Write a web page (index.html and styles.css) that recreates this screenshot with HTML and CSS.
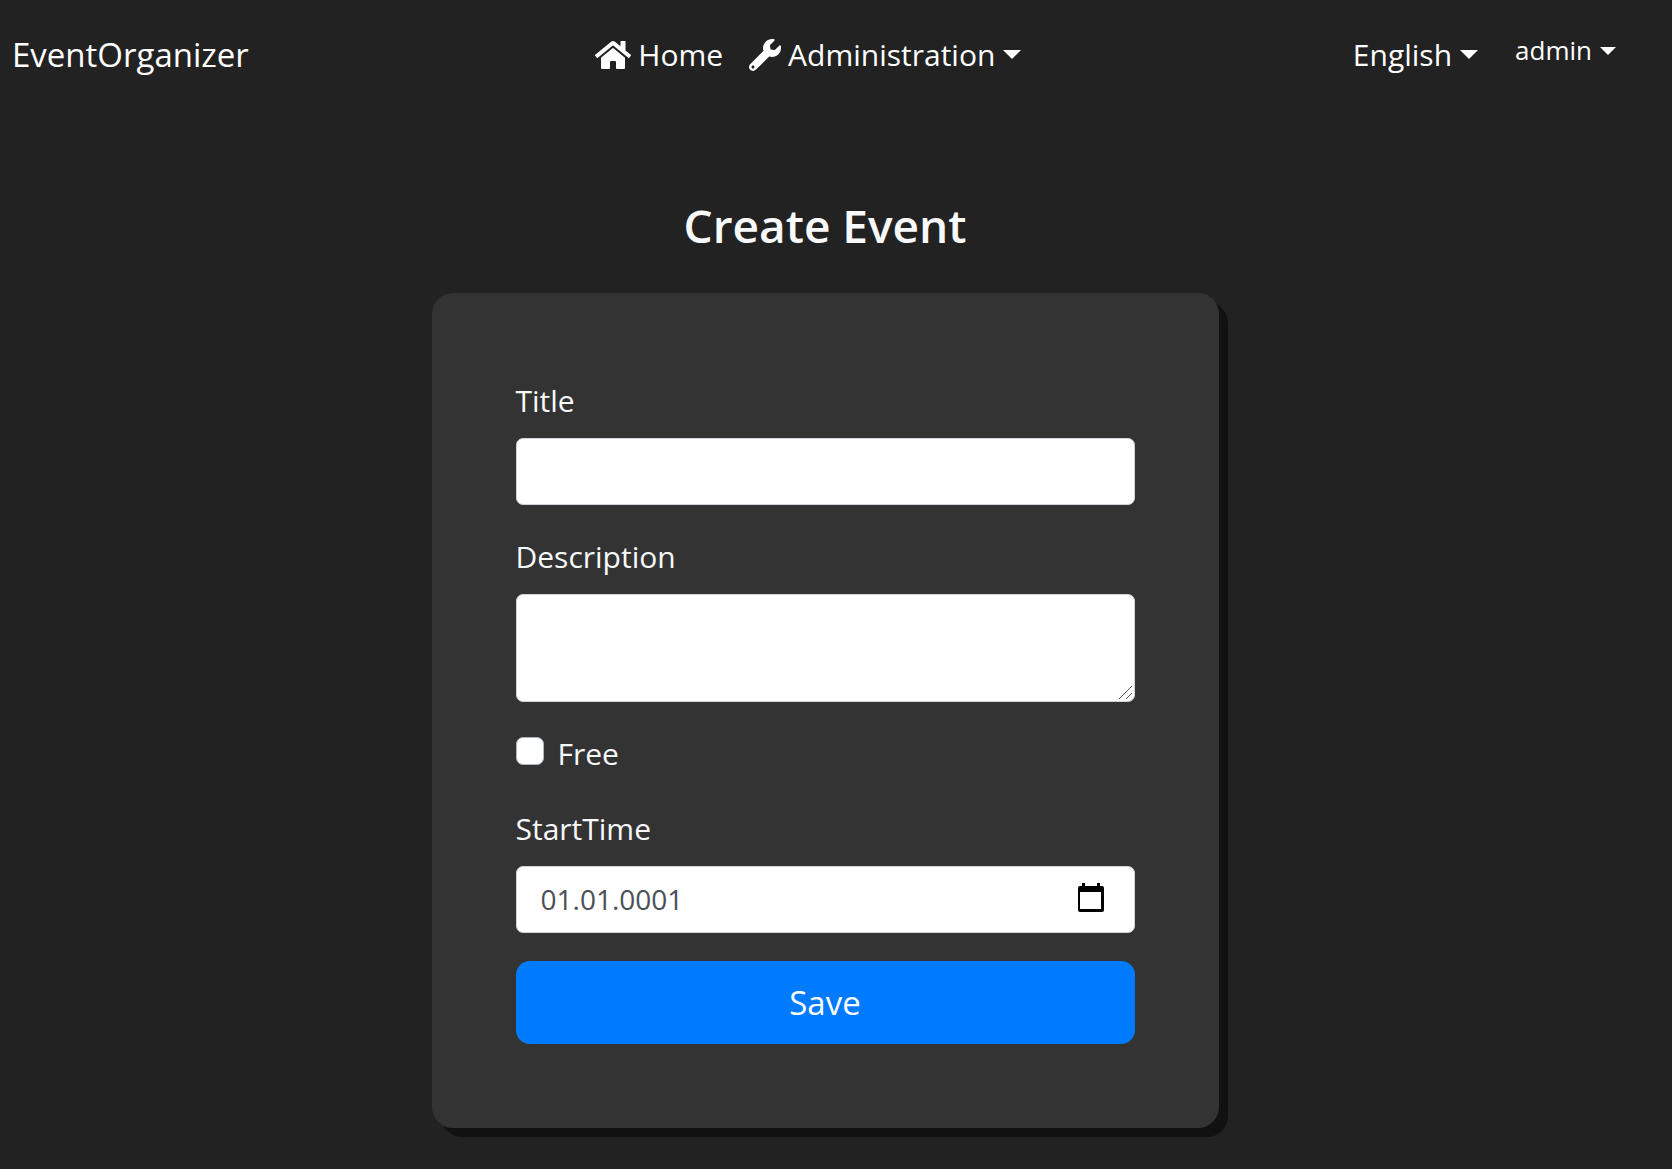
FILE: index.html
```html
<!DOCTYPE html>
<html lang="en">
<head>
<meta charset="utf-8">
<meta name="viewport" content="width=device-width, initial-scale=1">
<title>Create Event - EventOrganizer</title>
<link rel="stylesheet" href="styles.css">
</head>
<body>
<header class="navbar">
  <a class="brand" href="#">EventOrganizer</a>
  <nav class="menu">
    <a class="menu-item" href="#"><svg class="icon-home" viewBox="0 0 576 512" aria-hidden="true"><path fill="currentColor" d="M280.37 148.26L96 300.11V464a16 16 0 0 0 16 16l112.06-.29a16 16 0 0 0 15.92-16V368a16 16 0 0 1 16-16h64a16 16 0 0 1 16 16v95.64a16 16 0 0 0 16 16.05L464 480a16 16 0 0 0 16-16V300L295.67 148.26a12.19 12.19 0 0 0-15.3 0zM571.6 251.47L488 182.56V44.05a12 12 0 0 0-12-12h-56a12 12 0 0 0-12 12v72.61L318.47 43a48 48 0 0 0-61 0L4.34 251.47a12 12 0 0 0-1.6 16.9l25.5 31A12 12 0 0 0 45.15 301l235.22-193.74a12.19 12.19 0 0 1 15.3 0L530.9 301a12 12 0 0 0 16.9-1.6l25.5-31a12 12 0 0 0-1.7-16.93z"/></svg>Home</a>
    <button class="menu-item dropdown" type="button"><svg class="icon-wrench" viewBox="0 0 512 512" aria-hidden="true"><path fill="currentColor" d="M507.73 109.1c-2.24-9.03-13.54-12.09-20.12-5.51l-74.36 74.36-67.88-11.31-11.31-67.88 74.36-74.36c6.62-6.62 3.43-17.9-5.66-20.16-47.38-11.74-99.55.91-136.58 37.93-39.64 39.64-50.55 97.1-34.05 147.2L18.74 402.76c-24.99 24.99-24.99 65.51 0 90.5 24.99 24.99 65.51 24.99 90.5 0l213.21-213.21c50.12 16.71 107.47 5.68 147.37-34.22 37.07-37.07 49.7-89.32 37.91-136.73zM64 472c-13.25 0-24-10.75-24-24 0-13.26 10.75-24 24-24s24 10.74 24 24c0 13.25-10.75 24-24 24z"/></svg>Administration</button>
  </nav>
  <div class="account">
    <button class="menu-item dropdown" type="button">English</button>
    <button class="menu-item user dropdown" type="button">admin</button>
  </div>
</header>
<main class="page">
  <h1 class="heading">Create Event</h1>
  <form class="card">
    <div class="field">
      <label class="label" for="title">Title</label>
      <input class="control" id="title" type="text">
    </div>
    <div class="field">
      <label class="label" for="description">Description</label>
      <textarea class="control area" id="description"></textarea>
    </div>
    <div class="check">
      <input class="checkbox" id="free" type="checkbox">
      <label class="label" for="free">Free</label>
    </div>
    <div class="field">
      <label class="label" for="start">StartTime</label>
      <div class="control date">
        <input class="date-input" id="start" type="text" value="01.01.0001">
        <button class="picker" type="button" aria-label="Open calendar"><svg class="icon-calendar" viewBox="0 0 28 30" aria-hidden="true"><path fill="currentColor" fill-rule="evenodd" d="M5 0h3v3h12V0h3v3h2a2 2 0 0 1 2 2v22a2 2 0 0 1-2 2H3a2 2 0 0 1-2-2V5a2 2 0 0 1 2-2h2zM3 9v17h21V9z"/></svg></button>
      </div>
    </div>
    <button class="save" type="submit">Save</button>
  </form>
</main>
</body>
</html>
```
FILE: styles.css
```css
* {
  box-sizing: border-box;
}

body {
  margin: 0;
  background: #222;
  color: #f8f9fa;
  font-family: "Open Sans", "Noto Sans", sans-serif;
  font-size: 30px;
  line-height: 47px;
}

button,
input,
textarea {
  font: inherit;
}

.navbar {
  display: flex;
  justify-content: space-between;
  align-items: center;
  padding: 31px 56px 27px 12px;
  color: #fff;
}

.brand {
  margin-right: 28px;
  color: inherit;
  font-size: 33px;
  text-decoration: none;
}

.menu,
.account {
  display: flex;
  align-items: flex-start;
}

.menu-item {
  display: flex;
  align-items: center;
  padding: 0 13px;
  border: 0;
  background: none;
  color: inherit;
  text-decoration: none;
  cursor: pointer;
}

.dropdown::after {
  content: "";
  margin-left: 8px;
  border: 9px solid transparent;
  border-top-color: currentColor;
  border-bottom: 0;
}

.icon-home {
  width: 36px;
  height: 32px;
  margin-right: 7px;
}

.icon-wrench {
  width: 32px;
  height: 32px;
  margin-right: 7px;
}

.user {
  padding: 0 0 0 24px;
  font-size: 26px;
  line-height: 39px;
}

.user::after {
  border-width: 8px 8px 0;
}

.page {
  padding: 84px 22px 32px 0;
}

.heading {
  margin: 0 0 32px;
  font-size: 46px;
  font-weight: 600;
  line-height: 72px;
  text-align: center;
}

.card {
  display: flex;
  flex-direction: column;
  gap: 28px;
  max-width: 787px;
  margin: 0 auto;
  padding: 84px;
  border-radius: 21px;
  background: #333;
  box-shadow: 9px 9px 0 #111;
}

.field {
  display: flex;
  flex-direction: column;
  gap: 14px;
}

.control {
  width: 100%;
  height: 67px;
  padding: 0 24px;
  border: 1px solid #ced4da;
  border-radius: 7px;
  background: #fff;
  color: #495057;
  font-size: 28px;
}

.area {
  height: 108px;
  resize: vertical;
}

.area::-webkit-resizer {
  background: url("data:image/svg+xml,%3Csvg xmlns='http://www.w3.org/2000/svg' viewBox='0 0 15 15'%3E%3Cpath d='M0 13L13 0M7 13L13 7' stroke='%23555' fill='none'/%3E%3C/svg%3E") no-repeat center / contain;
}

.check {
  display: flex;
  align-items: flex-start;
  gap: 14px;
}

.checkbox {
  width: 28px;
  height: 28px;
  margin: 7px 0 0;
  border: 1px solid #adb5bd;
  border-radius: 7px;
  background: #fff;
  appearance: none;
}

.date {
  display: flex;
  align-items: center;
}

.date-input {
  flex: 1;
  min-width: 0;
  padding: 0;
  border: 0;
  background: none;
  color: inherit;
}

.picker {
  display: flex;
  padding: 0 5px 4px;
  border: 0;
  background: none;
  color: #000;
}

.icon-calendar {
  width: 28px;
  height: 30px;
}

.save {
  padding: 18px;
  border: 0;
  border-radius: 14px;
  background: #007bff;
  color: #fff;
  font-size: 33px;
}
```
